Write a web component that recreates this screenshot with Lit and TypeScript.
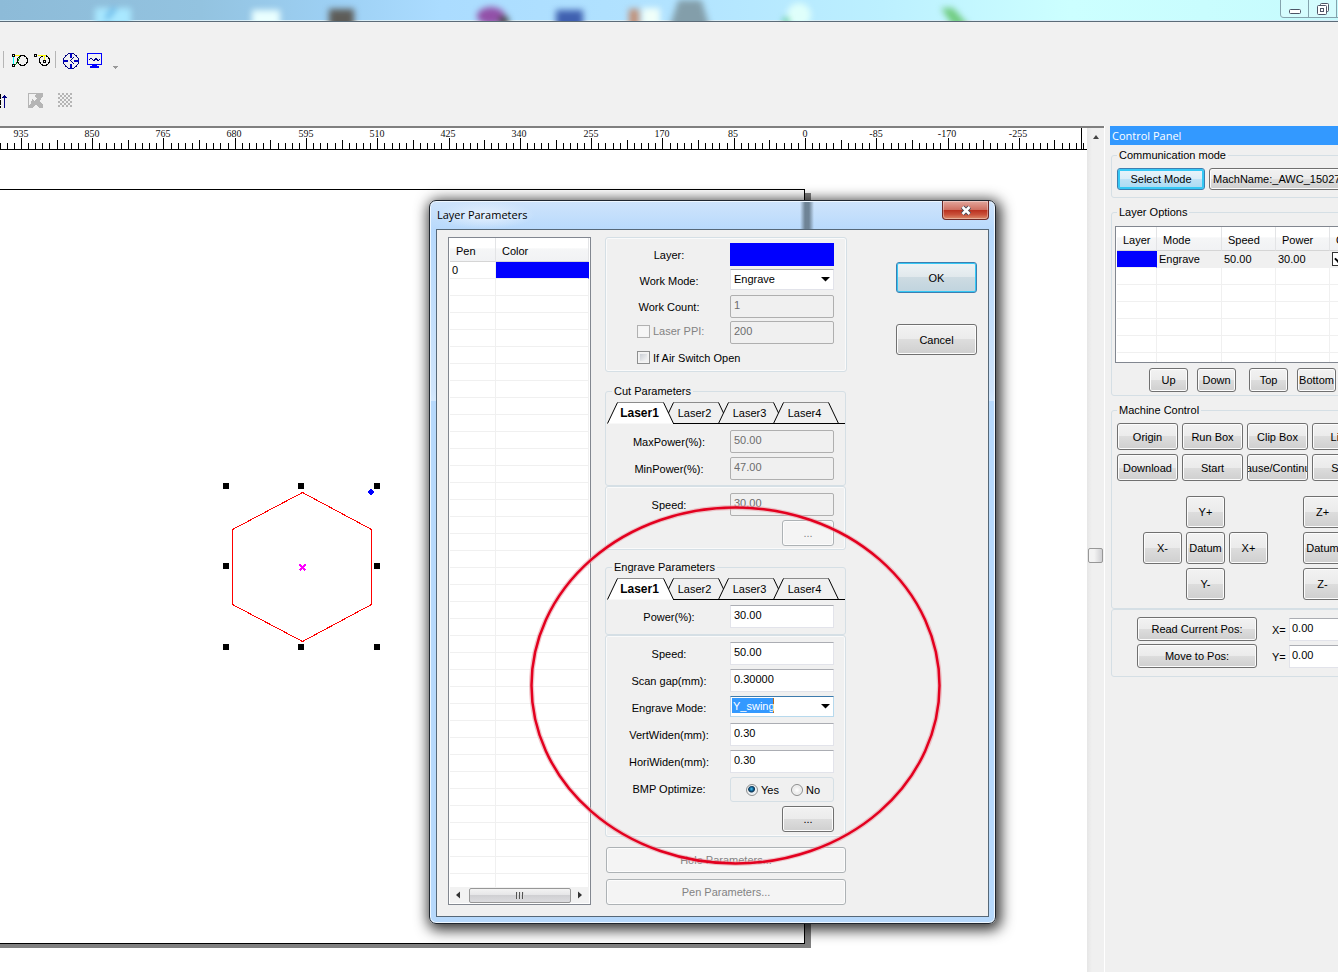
import { LitElement, html, svg, css } from "lit";
import { customElement } from "lit/decorators.js";

const controls = css`
  * { box-sizing: border-box; }
  button, input, select {
    font: inherit;
    margin: 0;
  }
  button {
    border: 1px solid #707070;
    border-radius: 3px;
    background: linear-gradient(#f2f2f2, #ebebeb 50%, #dddddd 50%, #cfcfcf);
    box-shadow: inset 0 0 0 1px #fcfcfc;
    color: #000;
    padding: 0;
    white-space: nowrap;
    overflow: hidden;
    display: flex;
    align-items: center;
    justify-content: center;
  }
  button.hot {
    border-color: #3c7fb1;
    background: linear-gradient(#eaf4fa, #d9edf8 50%, #bfe2f6 50%, #a8daf3);
    box-shadow: inset 0 0 0 2px #35c8f5;
  }
  button:disabled {
    border-color: #adb2b5;
    background: #f4f4f4;
    color: #838383;
  }
  fieldset {
    margin: 0;
    min-width: 0;
    padding: 0;
    border: 1px solid #d5dfe5;
    border-radius: 3px;
  }
  legend {
    line-height: 13px;
    padding: 0 2px;
    margin-left: 6px;
  }
  table { border-collapse: separate; border-spacing: 0; table-layout: fixed; }
  th, td { font-weight: normal; text-align: left; padding: 0; white-space: nowrap; }
  th {
    height: 24px;
    padding: 2px 0 0 6px;
    border-right: 1px solid #e3e4e6;
    border-bottom: 1px solid #d5d5d5;
    background: linear-gradient(#fff 45%, #f5f6f7 46%, #f1f2f4);
  }
  td {
    height: 17px;
    line-height: 16px;
    padding-left: 2px;
    border-right: 1px solid #f0f0f0;
    border-bottom: 1px solid #f0f0f0;
  }
  td.ink { background: #00f; border-right-color: #00f; }
`;

@customElement("ruler-bar")
class RulerBar extends LitElement {
  static styles = css`
    :host { display: block; box-sizing: border-box; height: 24px; background: #fff; border-top: 2px solid #6e6e6e; border-top-color: #808080; overflow: hidden; }
    svg { display: block; width: 100%; height: 22px; }
    text { font: 10px "Liberation Serif", serif; text-anchor: middle; fill: #111; }
    .tick { stroke: #000; stroke-width: 1; }
  `;
  render() {
    const step = 71.28;
    const ticks = [];
    for (let i = -3; i <= 149; i++) {
      const x = Math.floor(21.4 + (i * step) / 10) + 0.5;
      if (x > 1086) break;
      const top = i % 10 === 0 ? 10 : Math.abs(i % 10) === 5 ? 12 : 15;
      ticks.push(svg`<line class="tick" x1=${x} x2=${x} y1=${top} y2="22"/>`);
    }
    const labels = Array.from({ length: 15 }, (_, i) => 935 - i * 85);
    return html`<svg>
      ${ticks}
      ${labels.map((n, i) => svg`<text x=${Math.round(20.5 + i * step)} y="9">${n}</text>`)}
      <line class="tick" x1="1081.5" x2="1081.5" y1="0" y2="22" />
      <line class="tick" x1="0" x2="100%" y1="21.5" y2="21.5" />
    </svg>`;
  }
}

@customElement("drawing-canvas")
class DrawingCanvas extends LitElement {
  static styles = css`
    :host { display: block; flex: 1; background: #fff; overflow: hidden; position: relative; }
    svg { position: absolute; inset: 0; width: 100%; height: 100%; }
  `;
  render() {
    const handles = [[223, 333], [298, 333], [374, 333], [223, 413], [374, 413], [223, 494], [298, 494], [374, 494]];
    return html`<svg shape-rendering="crispEdges">
      <rect x="-10" y="43" width="821" height="755" fill="#808080" />
      <rect x="-10" y="39.5" width="814.5" height="754" fill="#fff" stroke="#000" />
      <path d="M302.5 342.5L371.5 379.5V454.5L302.5 491.5L232.5 454.5V379.5Z" fill="none" stroke="#f00" />
      ${handles.map(([x, y]) => svg`<rect x=${x} y=${y} width="6" height="6"/>`)}
      <path d="M371 339l3 3l-3 3l-3-3z" fill="#00f" stroke="#00f" />
      <path d="M299.500 414.500l6 6M305.500 414.500l-6 6" stroke="#f0f" stroke-width="2" />
    </svg>`;
  }
}

@customElement("control-panel")
class ControlPanel extends LitElement {
  static styles = [controls, css`
    :host { display: block; flex: 0 0 228px; overflow: hidden; background: #f0f0f0; font: 11px "Liberation Sans", Arial, sans-serif; color: #000; }
    h2 { margin: 0; padding-left: 2px; background: #39f; color: #fff; font: 11px/19px "Open Sans", sans-serif; }
    .inner { width: 310px; padding: 4px 0 0 1px; }
    legend { margin-left: 5px; }
    .mode { display: flex; gap: 4px; padding: 6px 5px 7px; }
    .mode button { height: 22px; width: 88px; }
    .mode button.machine { width: 170px; justify-content: flex-start; padding-left: 3px; }
    .options { margin-top: 8px; padding: 0 3px 3px; }
    .options legend { margin-left: 2px; }
    .options .grid { margin-top: 7px; height: 137px; width: 300px; border: 1px solid #828790; background: #fff; overflow: hidden; padding: 0 1px; }
    .options table { width: 296px; }
    .options tr.on td { background: #f0f0f0; }
    .options tr.on td.ink { background: #00f; }
    .tick { appearance: none; display: block; position: relative; width: 14px; height: 14px; border: 1px solid #333; background: #fff; }
    .tick:checked::after { content: ""; position: absolute; left: 2px; top: 2px; width: 7px; height: 4px; border: solid #000; border-width: 0 0 2px 2px; transform: rotate(-45deg); }
    .moves { display: flex; margin: 5px 0 0 34px; gap: 9px; }
    .moves button { width: 39px; height: 24px; }
    .moves .pair { display: flex; gap: 9px; margin-right: 4px; }
    .machine-box { margin-top: 8px; height: 205px; padding: 6px 5px; }
    .machine-box legend { margin-left: 0; }
    .run { display: grid; grid-template-columns: repeat(4, 61px); gap: 4px; }
    .run button { height: 27px; }
    .jog { display: flex; gap: 35px; margin: 15px 0 0 26px; }
    .xy { display: grid; grid-template-columns: repeat(3, 39px); gap: 4px; grid-template-areas: ". u ." "l c r" ". d ."; }
    .z { display: grid; gap: 4px; }
    .jog button { width: 39px; height: 32px; }
    .u { grid-area: u; } .l { grid-area: l; } .c { grid-area: c; } .r { grid-area: r; } .d { grid-area: d; }
    .pos { height: 68px; padding: 7px 0 0 25px; display: grid; grid-template-columns: 120px 32px 80px; row-gap: 3px; align-content: start; align-items: center; }
    .pos label { padding: 2px 0 0 15px; }
    .pos button { height: 24px; }
    .pos input { height: 23px; width: 80px; border: 1px solid #e2e3ea; border-top-color: #abadb3; background: #fff; padding: 0 2px 3px; }
  `];
  render() {
    const blank = Array.from({ length: 6 });
    return html`
      <h2>Control Panel</h2>
      <div class="inner">
        <fieldset>
          <legend>Communication mode</legend>
          <div class="mode"><button class="hot">Select Mode</button><button class="machine">MachName:_AWC_15027</button></div>
        </fieldset>
        <fieldset class="options">
          <legend>Layer Options</legend>
          <div class="grid"><table>
            <colgroup><col style="width:40px"><col style="width:65px"><col style="width:54px"><col style="width:54px"><col></colgroup>
            <thead><tr><th>Layer</th><th>Mode</th><th>Speed</th><th>Power</th><th>Output</th></tr></thead>
            <tbody>
              <tr class="on"><td class="ink"></td><td>Engrave</td><td>50.00</td><td>30.00</td><td><input class="tick" type="checkbox" checked aria-label="Output"></td></tr>
              ${blank.map(() => html`<tr><td></td><td></td><td></td><td></td><td></td></tr>`)}
            </tbody>
          </table></div>
          <div class="moves">
            <div class="pair"><button>Up</button><button>Down</button></div>
            <button>Top</button><button>Bottom</button>
          </div>
        </fieldset>
        <fieldset class="machine-box">
          <legend>Machine Control</legend>
          <div class="run">
            <button>Origin</button><button>Run Box</button><button>Clip Box</button><button>Light</button>
            <button>Download</button><button>Start</button><button>Pause/Continue</button><button>Stop</button>
          </div>
          <div class="jog">
            <div class="xy">
              <button class="u">Y+</button><button class="l">X-</button><button class="c">Datum</button><button class="r">X+</button><button class="d">Y-</button>
            </div>
            <div class="z"><button>Z+</button><button>Datum</button><button>Z-</button></div>
          </div>
        </fieldset>
        <fieldset class="pos">
          <button>Read Current Pos:</button><label for="px">X=</label><input id="px" value="0.00">
          <button>Move to Pos:</button><label for="py">Y=</label><input id="py" value="0.00">
        </fieldset>
      </div>`;
  }
}

@customElement("laser-tabs")
class LaserTabs extends LitElement {
  static styles = css`
    :host { display: block; position: relative; height: 22px; }
    svg { position: absolute; inset: 0; width: 100%; height: 22px; }
    nav { position: relative; display: flex; padding-left: 6px; }
    button { width: 55px; height: 22px; border: 0; padding: 0; background: none; font: inherit; color: #000; }
    button.on { font-weight: bold; font-size: 12px; }
  `;
  render() {
    return html`
      <svg fill="none" stroke="#000">
        <path d="M1.500 21.500L11.500 .5H57.500L67.500 21.500" fill="#fff" stroke="none" />
        <path d="M11.500 .5H57.500M67.500 .5H112.500M122.500 .5H167.500M177.500 .5H222.500" stroke="#8c8c8c" />
        <path d="M1.500 21.500L11.500 .5M57.500 .5L67.500 21.500M62.500 11L67.500 .5M112.500 .5L117.500 11M112.500 21.500L122.500 .5M167.500 .5L172.500 11M167.500 21.500L177.500 .5M222.500 .5L232.500 21.500M67 21.500H239" />
      </svg>
      <nav>
        <button class="on">Laser1</button><button>Laser2</button><button>Laser3</button><button>Laser4</button>
      </nav>`;
  }
}

@customElement("layer-dialog")
class LayerDialog extends LitElement {
  static styles = [controls, css`
    :host {
      display: block; box-sizing: border-box; width: 567px; padding: 0 6px 6px;
      border: 1px solid #20262e; border-radius: 7px;
      background:
        linear-gradient(90deg, transparent 370px, #6f8496 375px, #6f8496 379px, transparent 384px) no-repeat,
        linear-gradient(#cfe4fb 0, #b7d9fc 30px, #cfe4fb 190px, #d4e8fd 200px, #b7d9fc 200px);
      background-size: 100% 28px, auto;
      box-shadow: inset 0 0 0 1px #eef7ff, 2px 3px 14px 3px rgba(0,0,0,.8);
      font: 11px "Liberation Sans", Arial, sans-serif; color: #000;
    }
    header { display: flex; justify-content: space-between; height: 28px; }
    h1 { margin: 0; padding: 0 8px 0 1px; font: 11px/28px "Open Sans", sans-serif; background: radial-gradient(closest-side, #e6f1fd, transparent); }
    header button { width: 47px; height: 19px; border: 1px solid #6d2a27; border-top: 0; border-radius: 0 0 4px 4px; background: linear-gradient(#e3a79d, #cf7062 48%, #b92f1e 50%, #c9503a 75%, #dc8b6a); box-shadow: inset 0 0 0 1px rgba(255,255,255,.35); }
    .client { display: flex; border: 1px solid #566878; background: #f0f0f0; padding: 7px 11px; }
    .pens { width: 143px; display: flex; flex-direction: column; border: 1px solid #828790; background: #fff; padding: 0 1px 1px; margin-bottom: 4px; }
    .rows { flex: 1 1 0; min-height: 0; overflow: hidden; }
    .rows table { width: 139px; }
    .hbar { height: 16px; display: flex; align-items: center; justify-content: space-between; background: #f2f2f2; }
    .hbar svg { width: 18px; height: 16px; }
    .hbar i { width: 102px; height: 15px; border: 1px solid #979797; border-radius: 2px; background: linear-gradient(#f3f3f3, #e6e6e8 45%, #d0d0d3 50%, #dcdcdf); display: flex; justify-content: center; align-items: center; gap: 1px; }
    .hbar b { width: 2px; height: 7px; background: linear-gradient(90deg, #555 50%, #ddd 50%); }
    .params { width: 242px; margin-left: 14px; padding-bottom: 4px; }
    fieldset { box-shadow: inset 0 0 0 1px #fafafa; }
    fieldset.cut, fieldset.engrave { box-shadow: none; }
    .general { height: 135px; padding-top: 5px; }
    .row { display: grid; grid-template-columns: 124px 104px; align-items: start; height: 27px; }
    .general .row { height: 26px; }
    .row > label, .row > .cap { line-height: 13px; padding: 6px 0 0 2px; text-align: center; white-space: nowrap; }
    .swatch { height: 23px; background: #00f; }
    input.text { width: 104px; height: 23px; border: 1px solid #e2e3ea; border-top-color: #abadb3; background: #fff; padding: 0 3px 3px; color: #000; }
    input.text:disabled { border: 1px solid #afafaf; border-radius: 2px; background: #f0f0f0; color: #6d6d6d; }
    .drop { position: relative; }
    .drop svg { position: absolute; right: 4px; top: 8px; width: 9px; height: 5px; pointer-events: none; }
    select { appearance: none; display: block; width: 104px; height: 21px; border: 1px solid #e2e3ea; border-top-color: #abadb3; border-radius: 0; background: #fff; color: #000; padding: 0 3px 1px; outline: none; }
    select.picked { border-color: #3d7bad #b7d9ed #b7d9ed #b5cfe7; color: #fff; background: #fff linear-gradient(90deg, #39f 41px, #b86a20 41px) 1px 1px / 42px 15px no-repeat; padding-left: 2px; }
    option { color: #000; }
    .row > label.check, .check { display: flex; align-items: center; gap: 3px; padding: 4px 0 0 31px; text-align: left; }
    .check input { appearance: none; width: 13px; height: 13px; border: 1px solid #8e8f8f; background: linear-gradient(135deg, #cbcfd5, #f6f6f6) content-box; padding: 2px; box-shadow: inset 0 0 0 1px #f4f4f4; }
    .check.off { color: #838383; }
    .check.off input { border-color: #b1b1b1; background: #f6f6f6; }
    .cut { margin-top: 13px; height: 101px; width: 241px; }
    laser-tabs { margin: 4px 0 6px; }
    .lower { padding-top: 6px; width: 241px; }
    .cut-low { height: 64px; }
    .more { width: 52px; height: 26px; margin-left: 176px; }
    .engrave { margin-top: 11px; height: 74px; width: 241px; }
    .engrave laser-tabs { margin-bottom: 5px; }
    .engrave-low { height: 202px; }
    .yesno { display: flex; align-items: center; height: 25px; gap: 12px; border: 1px solid #d5dfe5; border-radius: 3px; padding-left: 15px; }
    .yesno label { display: flex; align-items: center; gap: 3px; }
    .yesno input { appearance: none; width: 12px; height: 12px; border-radius: 50%; border: 1px solid #8e8f8f; background: radial-gradient(#fff, #d8d8d8); box-shadow: inset 0 0 0 1px #f4f4f4; }
    .yesno input:checked { background: radial-gradient(circle at 45% 40%, #4fc6f0 0, #0b5b8f 2px, #12344f 3px, #e8eef2 4px); }
    .engrave-low .row { height: 27px; }
    .engrave-low .more { margin-top: 2px; }
    .wide { width: 240px; height: 26px; margin: 6px 0 0 1px; }
    .wide.first { margin-top: 10px; }
    .actions { margin: 25px 0 0 49px; display: flex; flex-direction: column; gap: 31px; }
    .actions button { width: 81px; height: 31px; }
    .actions .ok { border-color: #3c7fb1; background: linear-gradient(#eef3f5, #e0e8ec 50%, #cddbe2 50%, #c0d4de); box-shadow: inset 0 0 0 1px #35c8f5; }
  `];
  private arrow = html`<svg viewBox="0 0 9 5"><path d="M0 0H9L4.500 4.500Z" fill="#000"/></svg>`;
  private field(id: string, label: string, value: string, disabled = false) {
    return html`<div class="row"><label for=${id}>${label}</label><input class="text" id=${id} .value=${value} ?disabled=${disabled}></div>`;
  }
  render() {
    return html`
      <header>
        <h1>Layer Parameters</h1>
        <button aria-label="Close"><svg width="14" height="11" viewBox="0 0 14 11"><path d="M3.500 2l7 7M10.500 2l-7 7" stroke="#444a58" stroke-width="4.500"/><path d="M3.500 2l7 7M10.500 2l-7 7" stroke="#fff" stroke-width="2.500"/></svg></button>
      </header>
      <div class="client">
        <div class="pens">
          <div class="rows"><table>
            <colgroup><col style="width:46px"><col></colgroup>
            <thead><tr><th>Pen</th><th>Color</th></tr></thead>
            <tbody>
              <tr><td>0</td><td class="ink"></td></tr>
              ${Array.from({ length: 37 }).map(() => html`<tr><td></td><td></td></tr>`)}
            </tbody>
          </table></div>
          <div class="hbar">
            <svg><path d="M10 4.500v7L6 8z" fill="#333"/></svg><i><b></b><b></b><b></b></i><svg><path d="M7 4.500v7L11 8z" fill="#333"/></svg>
          </div>
        </div>
        <div class="params">
          <fieldset class="general">
            <div class="row"><span class="cap">Layer:</span><div class="swatch"></div></div>
            <div class="row"><label for="wm">Work Mode:</label><div class="drop"><select id="wm"><option>Engrave</option><option>Cut</option></select>${this.arrow}</div></div>
            ${this.field("wc", "Work Count:", "1", true)}
            <div class="row"><label class="check off"><input type="checkbox" disabled>Laser PPI:</label><input class="text" value="200" aria-label="Laser PPI" disabled></div>
            <label class="check"><input type="checkbox">If Air Switch Open</label>
          </fieldset>
          <fieldset class="cut">
            <legend>Cut Parameters</legend>
            <laser-tabs></laser-tabs>
            ${this.field("mx", "MaxPower(%):", "50.00", true)}
            ${this.field("mn", "MinPower(%):", "47.00", true)}
          </fieldset>
          <fieldset class="lower cut-low">
            ${this.field("cs", "Speed:", "30.00", true)}
            <button class="more" disabled>...</button>
          </fieldset>
          <fieldset class="engrave">
            <legend>Engrave Parameters</legend>
            <laser-tabs></laser-tabs>
            ${this.field("pw", "Power(%):", "30.00")}
          </fieldset>
          <fieldset class="lower engrave-low">
            ${this.field("es", "Speed:", "50.00")}
            ${this.field("sg", "Scan gap(mm):", "0.30000")}
            <div class="row"><label for="em">Engrave Mode:</label><div class="drop"><select id="em" class="picked"><option>Y_swing</option><option>X_swing</option></select>${this.arrow}</div></div>
            ${this.field("vw", "VertWiden(mm):", "0.30")}
            ${this.field("hw", "HoriWiden(mm):", "0.30")}
            <div class="row"><span class="cap">BMP Optimize:</span>
              <div class="yesno"><label><input type="radio" name="bmp" checked>Yes</label><label><input type="radio" name="bmp">No</label></div></div>
            <button class="more">...</button>
          </fieldset>
          <button class="wide first" disabled>Hole Parameters...</button>
          <button class="wide" disabled>Pen Parameters...</button>
        </div>
        <div class="actions"><button class="ok">OK</button><button>Cancel</button></div>
      </div>`;
  }
}

@customElement("app-root")
class AppRoot extends LitElement {
  static styles = css`
    * { box-sizing: border-box; }
    :host { display: flex; flex-direction: column; position: relative; min-height: 100vh; overflow: hidden; background: #f1f1f1; }
    .title { position: relative; display: flex; justify-content: flex-end; height: 22px; border-bottom: 1px solid #5b6b78; box-shadow: inset 0 -1px 0 #d9eef8; overflow: hidden;
      background: linear-gradient(90deg, #8dbbd8, #93c3e0 15%, #9dd0f4 25%, #abdcff 33%, #b2e3ff 50%, #bcf0ff 66%, #ccffff 80%, #c6fbfd); }
    .glow { position: absolute; inset: 0; width: 100%; height: 40px; filter: blur(3px); }
    .caption { position: relative; display: flex; width: 58px; height: 18px; border: 1px solid #84a3ad; border-top: 0; border-right: 0; border-radius: 0 0 0 4px; }
    .caption button { display: flex; align-items: center; justify-content: center; width: 28px; height: 17px; border: 0; border-right: 1px solid #84a3ad; background: rgba(255,255,255,.25); padding: 0; }
    .bars { height: 104px; padding-top: 24px; }
    .bars svg { display: block; }
    .work { display: flex; flex: 1; }
    .sheet { flex: 1; min-width: 0; display: flex; flex-direction: column; }
    .vbar { width: 17px; border-top: 2px solid #808080; background: linear-gradient(90deg, #e6e6e6, #f0f0f0 30%); display: flex; flex-direction: column; align-items: center; }
    .vbar svg { height: 20px; width: 16px; flex: none; }
    .vbar button { width: 15px; height: 15px; padding: 0; margin-top: 400px; border: 1px solid #979797; border-radius: 2px; background: linear-gradient(90deg, #f3f3f3 40%, #cfcfd2); }
    .split { width: 6px; border-left: 1px solid #fff; background: #f0f0f0; }
    layer-dialog { position: absolute; left: 429px; top: 200px; }
    .ring { position: absolute; left: 525px; top: 500px; width: 420px; height: 370px; pointer-events: none; }
  `;
  render() {
    const weave = [];
    for (let y = 0; y < 14; y += 2) for (let x = (y / 2) % 2 ? 2 : 0; x < 14; x += 4) weave.push(svg`<rect x=${58 + x} y=${47 + y} width="2" height="2"/>`);
    return html`
      <div class="title">
        <svg class="glow">
          <path d="M95 8h36v20H95z" fill="#a9e8ff"/><path d="M106 19l9-11" stroke="#5fb0e4" stroke-width="4"/>
          <rect x="252" y="10" width="28" height="20" fill="#eaffff"/>
          <rect x="329" y="9" width="25" height="20" fill="#5d5c58"/>
          <ellipse cx="491" cy="16" rx="14" ry="9" fill="#9250a8"/><circle cx="504" cy="21" r="5" fill="#444"/>
          <rect x="556" y="10" width="27" height="20" fill="#3f60b0"/>
          <rect x="629" y="9" width="10" height="20" fill="#c29078"/><rect x="642" y="8" width="18" height="20" fill="#f0fffa"/>
          <path d="M680-5h20l12 40H667z" fill="#839eaa"/>
          <circle cx="799" cy="15" r="12" fill="#dffffb"/><rect x="783" y="18" width="6" height="6" fill="#5cc792"/>
          <path d="M941 8h12l16 18h-16z" fill="#70cc80"/>
        </svg>
        <div class="caption">
          <button aria-label="Minimize"><svg width="14" height="12"><rect x="1.500" y="6.500" width="11" height="4" rx="1" fill="#fff" stroke="#4e5566"/></svg></button>
          <button aria-label="Restore"><svg width="14" height="14" fill="#fff" stroke="#4e5566"><rect x="4.500" y="1.500" width="8" height="8" rx="1"/><rect x="1.500" y="3.500" width="9" height="9" rx="1"/><rect x="4.500" y="6.500" width="3" height="3"/></svg></button>
        </div>
      </div>
      <div class="bars">
        <svg width="380" height="80" shape-rendering="crispEdges" fill="none">
          <path d="M3.500 5v17M55.500 5v17" stroke="#b5b5b5"/>
          <path d="M15 9.500h8" stroke="#ff0"/><path d="M13.500 11v8" stroke="#0ff"/><path d="M15.500 19l5-9" stroke="#080"/>
          <circle cx="22.500" cy="14.500" r="5" stroke="#000"/>
          <path d="M12.500 8.500h2v2h-2zM12.500 18.500h2v2h-2zM34.500 8.500h2v2h-2z" stroke="#000"/>
          <circle cx="44.500" cy="14.500" r="5" stroke="#000"/><path d="M38 9.500h8M44.500 9v5" stroke="#ff0"/><rect x="43.500" y="14.500" width="2" height="2" stroke="#000"/>
          <circle cx="71" cy="15" r="7.500" stroke="#000080"/><path d="M71 7v5M71 18v5M63 15h5M74 15h5" stroke="#0000c0" stroke-width="2"/><path d="M70 15l4-4M71 15l3 3" stroke="#000080"/>
          <rect x="87.500" y="7.500" width="14" height="11" rx="1" stroke="#00f"/><path d="M89 14l2-2l3 3l2-3l2 3l2-2" stroke="#000080"/><path d="M90 21h9M92 20h5" stroke="#00f" stroke-width="2"/>
          <path d="M112.500 20h6l-3 3z" fill="#999"/>
          <path d="M.5 48v14" stroke="#000" stroke-dasharray="5 1"/><path d="M4.500 49v13M2 51.500h5M3 50.500h3" stroke="#000080"/>
          <path d="M28 47h15v15H28z" fill="#b5b5b5"/>
          <path d="M29 48h7l-2 2l3 2l-2 3l-3-2l-1 4l-2 2zM43 50v9l-3-4zM32 62l4-4l3 4z" fill="#f1f1f1"/>
          <g fill="#b5b5b5">${weave}</g>
        </svg>
      </div>
      <div class="work">
        <div class="sheet"><ruler-bar></ruler-bar><drawing-canvas></drawing-canvas></div>
        <div class="vbar"><svg><path d="M5 11h6l-3-4z" fill="#444"/></svg><button aria-label="Scroll"></button></div>
        <div class="split"></div>
        <control-panel></control-panel>
      </div>
      <layer-dialog></layer-dialog>
      <svg class="ring" fill="none"><ellipse cx="210.500" cy="185.500" rx="204" ry="178" stroke="#e8a0a8" stroke-opacity=".6" stroke-width="5"/><ellipse cx="210.500" cy="185.500" rx="204" ry="178" stroke="#e3001f" stroke-width="2.500"/></svg>`;
  }
}
